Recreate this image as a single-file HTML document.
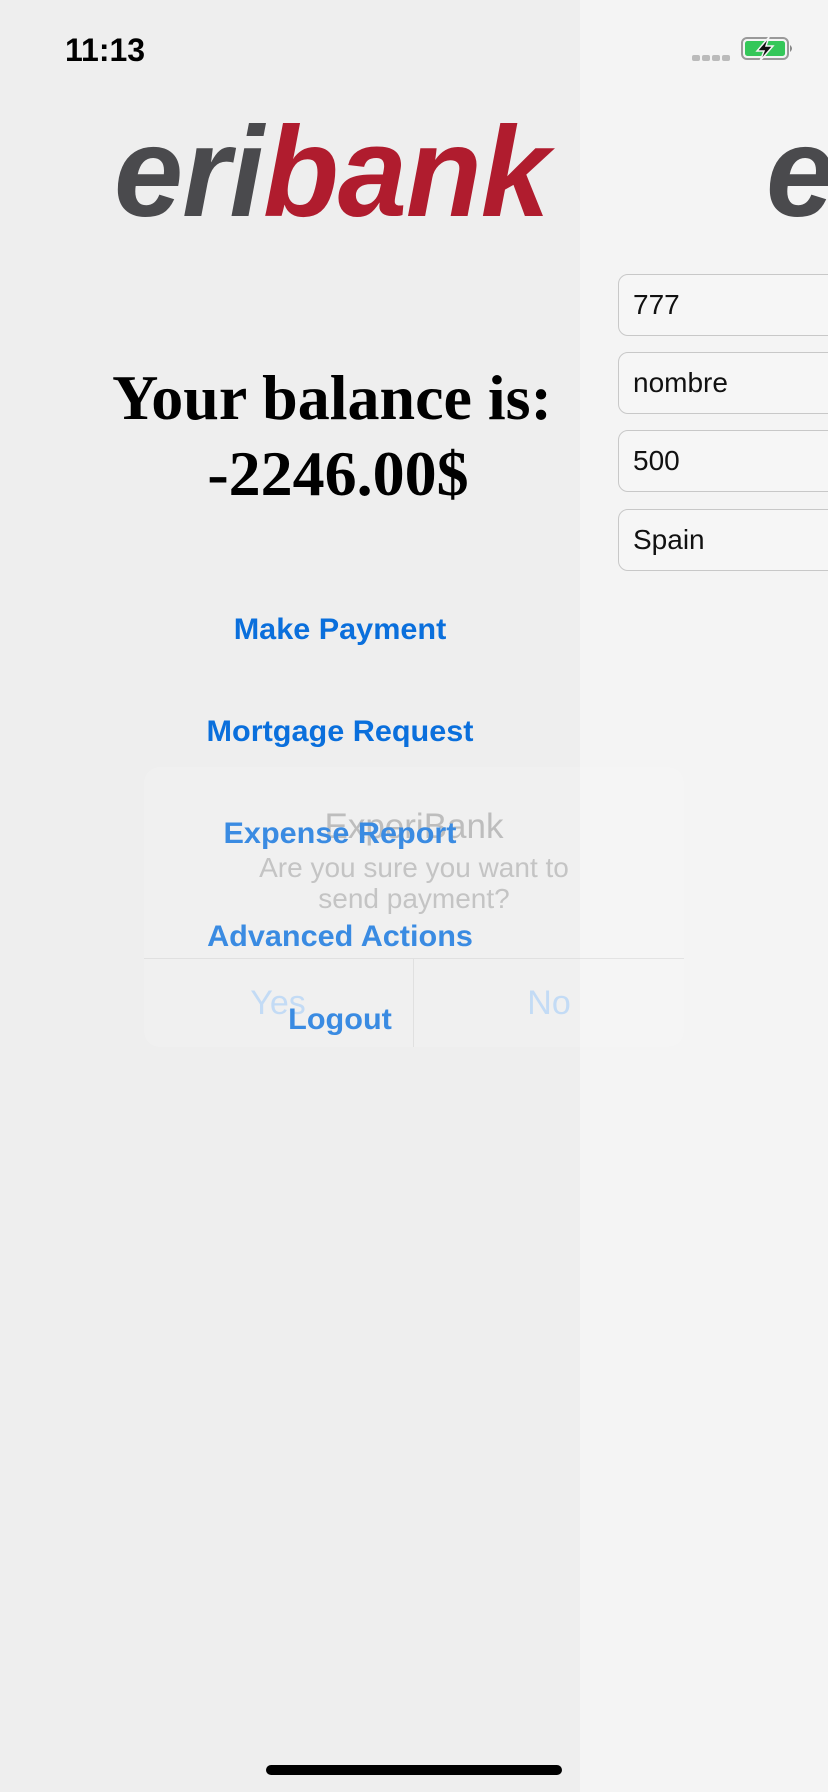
<!DOCTYPE html>
<html><head><meta charset="utf-8"><style>
*{margin:0;padding:0;box-sizing:border-box}
body{width:828px;height:1792px;position:relative;overflow:hidden;background:#eeeeee;font-family:"Liberation Sans",sans-serif}
.abs{position:absolute;white-space:nowrap}
#right{position:absolute;left:580px;top:0;width:248px;height:1792px;background:#f4f4f4}
.logo{font-family:"Liberation Sans",sans-serif;font-style:italic;font-weight:bold;font-size:128px;line-height:1;transform-origin:0 0;transform:scaleX(0.97);letter-spacing:-1px}
.field{position:absolute;left:618px;width:240px;height:62px;border:1px solid #c8c8c8;border-radius:10px;background:#f6f6f6;font-size:28px;color:#111;padding-left:14px;line-height:60px}
.bal{font-family:"Liberation Serif",serif;font-weight:bold;font-size:64px;color:#000;width:664px;text-align:center;left:0;line-height:1}
.btn{font-weight:bold;font-size:30px;color:#0a6fdc;width:680px;left:0;text-align:center;line-height:1;transform-origin:340px 0;transform:scaleX(1.02)}
</style></head><body>
<div id="right"></div>
<div class="abs" style="left:65px;top:32px;font-size:32px;font-weight:bold;color:#000">11:13</div>
<div class="abs" style="left:692px;top:55px;width:8px;height:6px;background:#bbb;border-radius:2px"></div>
<div class="abs" style="left:702px;top:55px;width:8px;height:6px;background:#bbb;border-radius:2px"></div>
<div class="abs" style="left:712px;top:55px;width:8px;height:6px;background:#bbb;border-radius:2px"></div>
<div class="abs" style="left:722px;top:55px;width:8px;height:6px;background:#bbb;border-radius:2px"></div>
<svg class="abs" style="left:740px;top:36px" width="58" height="26" viewBox="0 0 58 26">
<rect x="2" y="2" width="46" height="21" rx="5" fill="none" stroke="#999" stroke-width="2"/>
<rect x="5" y="5" width="40" height="15" rx="2.5" fill="#34c759"/>
<path d="M50 9 q4 3.5 0 7z" fill="#888"/>
<path d="M29 1 L17 15 L24 15 L20 25 L33 10 L26 10 Z" fill="#111" stroke="#f4f4f4" stroke-width="1.5"/>
</svg>
<div class="abs logo" style="left:114px;top:109px"><span style="color:#4a4a4d">eri</span><span style="color:#b01c2e">bank</span></div>
<div class="abs logo" style="left:766px;top:109px;color:#4a4a4d">e</div>
<div class="abs bal" style="top:366px">Your balance is:</div>
<div class="abs bal" style="top:442px;width:676px">-2246.00$</div>
<div class="field" style="top:274px">777</div>
<div class="field" style="top:352px">nombre</div>
<div class="field" style="top:430px">500</div>
<div class="field" style="top:509px">Spain</div>
<div class="abs" style="left:144px;top:767px;width:540px;height:280px;background:rgba(255,255,255,0.12);border-radius:16px"></div>
<div class="abs" style="left:144px;top:958px;width:540px;height:1px;background:rgba(200,200,200,0.4)"></div>
<div class="abs" style="left:413px;top:959px;width:1px;height:88px;background:rgba(200,200,200,0.4)"></div>
<div class="abs" style="left:0;width:828px;text-align:center;top:807px;font-size:35px;color:#bdbdbd">ExperiBank</div>
<div class="abs" style="left:0;width:828px;text-align:center;top:852px;font-size:28px;color:#c4c4c4;line-height:31px">Are you sure you want to<br>send payment?</div>
<div class="abs" style="left:178px;width:200px;text-align:center;top:984px;font-size:34px;color:#c3dbf5">Yes</div>
<div class="abs" style="left:449px;width:200px;text-align:center;top:984px;font-size:34px;color:#c3dbf5">No</div>
<div class="abs btn" style="top:615px">Make Payment</div>
<div class="abs btn" style="top:717px">Mortgage Request</div>
<div class="abs btn" style="top:819px;color:#3a8be2">Expense Report</div>
<div class="abs btn" style="top:922px;color:#3a8be2">Advanced Actions</div>
<div class="abs btn" style="top:1005px;color:#3a8be2">Logout</div>
<div class="abs" style="left:266px;top:1765px;width:296px;height:10px;border-radius:5px;background:#000"></div>
</body></html>
